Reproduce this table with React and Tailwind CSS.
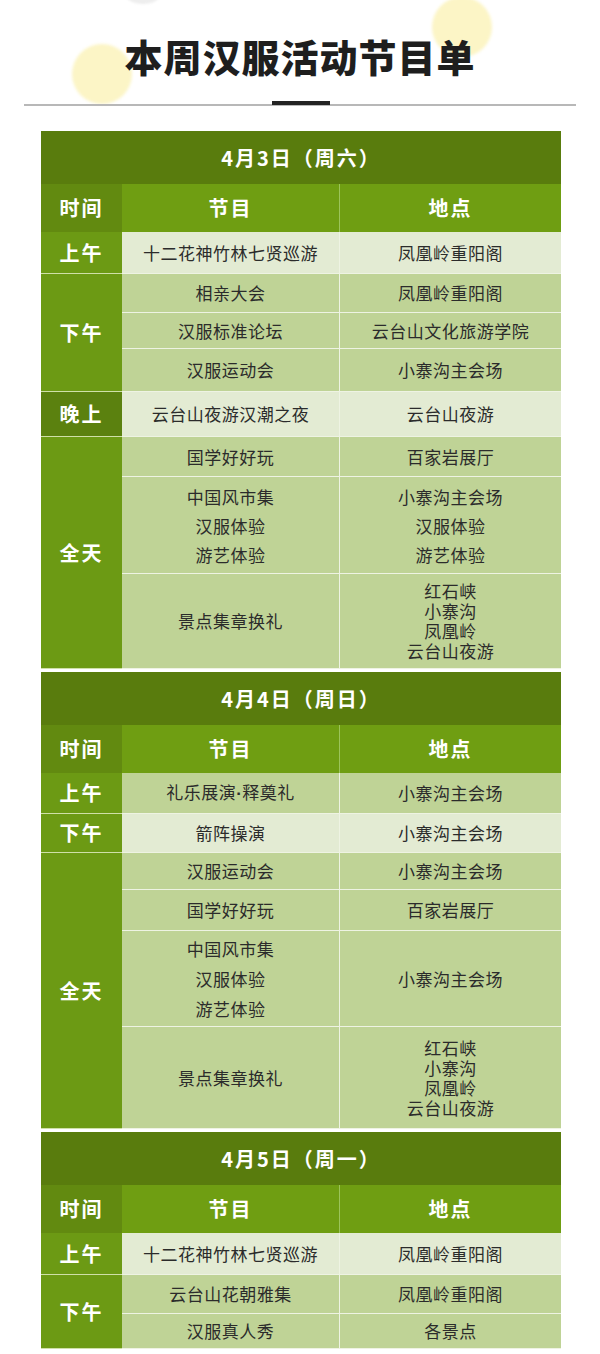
import React from "react";

const LIGHT = "bg-[#e3ebd3]";
const MID = "bg-[#bfd396]";

const schedule = [
  {
    date: "4月3日（周六）",
    groups: [
      {
        time: "上午",
        rows: [{ h: "h-[42px]", bg: LIGHT, prog: ["十二花神竹林七贤巡游"], loc: ["凤凰岭重阳阁"] }],
      },
      {
        time: "下午",
        rows: [
          { h: "h-[39px]", bg: MID, prog: ["相亲大会"], loc: ["凤凰岭重阳阁"] },
          { h: "h-[36px]", bg: MID, prog: ["汉服标准论坛"], loc: ["云台山文化旅游学院"] },
          { h: "h-[43px]", bg: MID, prog: ["汉服运动会"], loc: ["小寨沟主会场"] },
        ],
      },
      {
        time: "晚上",
        dark: true,
        rows: [{ h: "h-[45px]", bg: LIGHT, prog: ["云台山夜游汉潮之夜"], loc: ["云台山夜游"] }],
      },
      {
        time: "全天",
        rows: [
          { h: "h-[40px]", bg: MID, prog: ["国学好好玩"], loc: ["百家岩展厅"] },
          {
            h: "h-[97px]",
            bg: MID,
            prog: ["中国风市集", "汉服体验", "游艺体验"],
            loc: ["小寨沟主会场", "汉服体验", "游艺体验"],
            lh: "leading-[29px]",
            locLh: "leading-[29px]",
          },
          {
            h: "h-[95px]",
            bg: MID,
            prog: ["景点集章换礼"],
            loc: ["红石峡", "小寨沟", "凤凰岭", "云台山夜游"],
            locLh: "leading-[20px]",
          },
        ],
      },
    ],
  },
  {
    date: "4月4日（周日）",
    groups: [
      {
        time: "上午",
        rows: [
          {
            h: "h-[41px]",
            bg: MID,
            prog: [
              <>
                礼乐展演<span className="font-['Liberation_Sans'] font-bold">·</span>释奠礼
              </>,
            ],
            loc: ["小寨沟主会场"],
          },
        ],
      },
      {
        time: "下午",
        rows: [{ h: "h-[39px]", bg: LIGHT, prog: ["箭阵操演"], loc: ["小寨沟主会场"] }],
      },
      {
        time: "全天",
        rows: [
          { h: "h-[37px]", bg: MID, prog: ["汉服运动会"], loc: ["小寨沟主会场"] },
          { h: "h-[41px]", bg: MID, prog: ["国学好好玩"], loc: ["百家岩展厅"] },
          {
            h: "h-[96px]",
            bg: MID,
            prog: ["中国风市集", "汉服体验", "游艺体验"],
            loc: ["小寨沟主会场"],
            lh: "leading-[30px]",
          },
          {
            h: "h-[102px]",
            bg: MID,
            prog: ["景点集章换礼"],
            loc: ["红石峡", "小寨沟", "凤凰岭", "云台山夜游"],
            locLh: "leading-[20px]",
          },
        ],
      },
    ],
  },
  {
    date: "4月5日（周一）",
    groups: [
      {
        time: "上午",
        rows: [{ h: "h-[42px]", bg: LIGHT, prog: ["十二花神竹林七贤巡游"], loc: ["凤凰岭重阳阁"] }],
      },
      {
        time: "下午",
        rows: [
          { h: "h-[39px]", bg: MID, prog: ["云台山花朝雅集"], loc: ["凤凰岭重阳阁"] },
          { h: "h-[35px]", bg: MID, prog: ["汉服真人秀"], loc: ["各景点"] },
        ],
      },
    ],
  },
];

const Cell = ({ lines, lh, border }) => (
  <div
    className={`flex flex-col items-center justify-center text-center ${lh || "leading-[22px]"} ${
      border ? "border-l border-[#eef3e3]" : ""
    }`}
  >
    {lines.map((t, i) => (
      <span key={i}>{t}</span>
    ))}
  </div>
);

const Section = ({ data }) => (
  <div className="w-[520px] ml-[41px] mb-[3px]">
    <div className="h-[53px] bg-[#597c0d] flex items-center justify-center text-white font-bold text-[20px] tracking-[2px]">
      {data.date}
    </div>
    <div className="h-[48px] grid grid-cols-[81px_217px_222px] text-white font-bold text-[20px] tracking-[2px]">
      <div className="bg-[#628a10] flex items-center justify-center">时间</div>
      <div className="bg-[#6f9e12] flex items-center justify-center">节目</div>
      <div className="bg-[#6f9e12] border-l border-[#9cc45a] flex items-center justify-center">地点</div>
    </div>
    {data.groups.map((g) => (
      <div key={g.time} className="flex">
        <div
          className={`w-[81px] shrink-0 flex items-center justify-center text-white font-bold text-[20px] tracking-[2px] border-b border-[#cfe0a8] ${
            g.dark ? "bg-[#5b810f]" : "bg-[#6c9a14]"
          }`}
        >
          {g.time}
        </div>
        <div className="flex-1 flex flex-col">
          {g.rows.map((r, i) => (
            <div
              key={i}
              className={`grid grid-cols-[217px_222px] border-b border-[#eef3e3] text-[17px] tracking-[0.5px] text-[#2b2b2b] ${r.h} ${r.bg}`}
            >
              <Cell lines={r.prog} lh={r.lh} />
              <Cell lines={r.loc} lh={r.locLh} border />
            </div>
          ))}
        </div>
      </div>
    ))}
  </div>
);

export default function App() {
  return (
    <div className="w-[600px] min-h-[1354px] bg-white font-['Noto_Sans_CJK_SC',sans-serif] overflow-hidden">
      <div className="relative h-[131px]">
        <div className="absolute left-[118px] top-[-44px] w-[50px] h-[48px] rounded-full bg-[#eeeeee] blur-[1px]" />
        <div className="absolute left-[72px] top-[44px] w-[60px] h-[60px] rounded-full bg-[#fcf5c6] blur-[1.5px]" />
        <div className="absolute left-[432px] top-[-3px] w-[60px] h-[60px] rounded-full bg-[#fcf5c6] blur-[1.5px]" />
        <div className="relative pt-[37px] text-center text-[38px] leading-none font-black tracking-[1px] text-[#1e1e1e]">
          本周汉服活动节目单
        </div>
        <div className="absolute left-[24px] right-[24px] top-[104px] h-[2px] bg-[#b8b8b8]" />
        <div className="absolute left-[272px] top-[101px] w-[58px] h-[4px] bg-[#232323]" />
      </div>
      {schedule.map((s) => (
        <Section key={s.date} data={s} />
      ))}
    </div>
  );
}
